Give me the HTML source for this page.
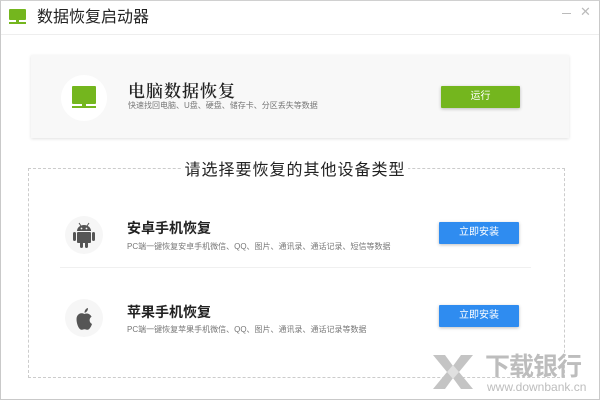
<!DOCTYPE html>
<html><head><meta charset="utf-8"><style>
*{margin:0;padding:0;box-sizing:border-box}
body{width:600px;height:400px;background:#fff;position:relative;overflow:hidden;font-family:"Liberation Sans","Noto Sans CJK SC",sans-serif}
.a{position:absolute}
.win{left:0;top:0;width:600px;height:400px;border:1px solid #c9c9c9;border-top:1px solid #d0d0d0}
.sub{font-size:8px;color:#777;white-space:nowrap}
.btn{color:#fff;font-size:10px;text-align:center;line-height:23px;border-radius:1px}
</style></head><body>
<div class="a win"></div>
<div class="a" style="left:9px;top:9px;width:17px;height:11px;background:#74b61e;border-radius:1px"></div>
<div class="a" style="left:9px;top:22px;width:17px;height:2px;background:#74b61e"></div>
<div class="a" style="left:16px;top:20px;width:3px;height:2px;background:#74b61e"></div>
<div class="a" style="left:37px;top:8px;font-size:16px;color:#222;line-height:20px">数据恢复启动器</div>
<div class="a" style="left:562px;top:13px;width:9px;height:1px;background:#bbb"></div>
<div class="a" style="left:580px;top:4px;font-size:13px;color:#bbb">✕</div>
<div class="a" style="left:1px;top:34px;width:598px;height:1px;background:#eee"></div>
<div class="a" style="left:31px;top:55px;width:538px;height:83px;background:#f8f8f8;box-shadow:0 1px 3px rgba(0,0,0,.12)"></div>
<div class="a" style="left:61px;top:75px;width:46px;height:46px;border-radius:50%;background:#fff"></div>
<div class="a" style="left:72px;top:86px;width:24px;height:18px;background:#74b61e;border-radius:1px"></div>
<div class="a" style="left:72px;top:106px;width:24px;height:2px;background:#74b61e"></div>
<div class="a" style="left:82px;top:104px;width:4px;height:4px;background:#74b61e"></div>
<div class="a" style="left:128px;top:80px;font-size:17px;color:#222;font-family:'Noto Serif CJK SC',serif;font-weight:600;line-height:20px;letter-spacing:1px">电脑数据恢复</div>
<div class="a sub" style="left:128px;top:100px">快速找回电脑、U盘、硬盘、储存卡、分区丢失等数据</div>
<div class="a btn" style="left:441px;top:86px;width:79px;height:22px;line-height:22px;background:#74b61e;box-shadow:0 1px 3px rgba(0,0,0,.25)">运行</div>
<div class="a" style="left:28px;top:168px;width:537px;height:210px;border:1px dashed #ccc"></div>
<div class="a" style="left:182px;top:160px;width:226px;height:20px;background:#fff;text-align:center;font-size:16px;line-height:22px;color:#222;letter-spacing:1px">请选择要恢复的其他设备类型</div>
<div class="a" style="left:65px;top:216px;width:38px;height:38px;border-radius:50%;background:#f6f6f6"></div>
<svg class="a" style="left:72px;top:220px" width="24" height="30" viewBox="0 0 24 30">
<g fill="#555"><path d="M5 11a7 6 0 0 1 14 0z"/><rect x="5" y="12" width="14" height="11" rx="1"/><rect x="1" y="12" width="3" height="9" rx="1.5"/><rect x="20" y="12" width="3" height="9" rx="1.5"/><rect x="8" y="22" width="3" height="6" rx="1.5"/><rect x="13" y="22" width="3" height="6" rx="1.5"/><path d="M7 3l2 3M17 3l-2 3" stroke="#555" stroke-width="1"/></g>
<circle cx="9.5" cy="8.5" r=".9" fill="#f6f6f6"/><circle cx="14.5" cy="8.5" r=".9" fill="#f6f6f6"/></svg>
<div class="a" style="left:127px;top:219px;font-size:14px;font-weight:bold;color:#222;line-height:18px">安卓手机恢复</div>
<div class="a sub" style="left:127px;top:241px">PC端一键恢复安卓手机微信、QQ、图片、通讯录、通话记录、短信等数据</div>
<div class="a btn" style="left:439px;top:222px;width:80px;height:22px;line-height:22px;background:#2f8cf0;box-shadow:0 1px 3px rgba(0,0,0,.25)">立即安装</div>
<div class="a" style="left:60px;top:267px;width:471px;height:1px;background:#f0f0f0"></div>
<div class="a" style="left:65px;top:299px;width:38px;height:38px;border-radius:50%;background:#f6f6f6"></div>
<svg class="a" style="left:76px;top:305px" width="17" height="26" viewBox="0 0 17 26">
<path fill="#555" d="M8.5 9c-2-1.3-6-1.2-7.5 2.5C-.5 15 1.8 23 4.5 24.5c1.5.8 2.5-.3 4-.3s2.5 1.1 4 .3c1.6-.8 3-4 3.5-5.5-2-1-2.8-3-2.200-5 .3-1 1-1.7 1.8-2.2C14 8.6 10.5 8 8.5 9z"/>
<path fill="#555" d="M8.5 7.8C8.4 5.5 10 3.3 12 3c.1 2.3-1.5 4.5-3.5 4.8z"/></svg>
<div class="a" style="left:127px;top:303px;font-size:14px;font-weight:bold;color:#222;line-height:18px">苹果手机恢复</div>
<div class="a sub" style="left:127px;top:324px">PC端一键恢复苹果手机微信、QQ、图片、通讯录、通话记录等数据</div>
<div class="a btn" style="left:439px;top:305px;width:80px;height:22px;line-height:22px;background:#2f8cf0;box-shadow:0 1px 3px rgba(0,0,0,.25)">立即安装</div>
<svg class="a" style="left:433px;top:355px" width="40" height="34" viewBox="0 0 40 34">
<g fill="#c4c4c4"><path d="M0 0h12l8 11 8-11h12L26 17l14 17H28l-8-11-8 11H0l14-17z"/></g>
<path d="M14 17l6-7 6 7-6 7z" fill="#e0e0e0"/></svg>
<div class="a" style="left:485px;top:352px;font-size:25px;color:#bdbdbd;font-weight:bold;line-height:30px;letter-spacing:-1px">下载银行</div>
<div class="a" style="left:487px;top:381px;font-size:12px;color:#bdbdbd;line-height:13px">www.downbank.cn</div>
</body></html>
